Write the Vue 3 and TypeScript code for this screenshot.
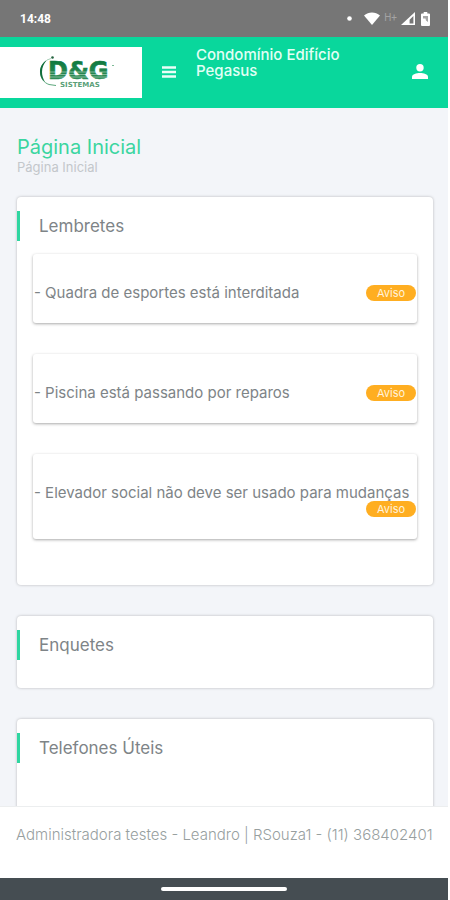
<script setup lang="ts">
interface Reminder {
  text: string
  tag: string
}

const reminders: Reminder[] = [
  { text: '- Quadra de esportes está interditada', tag: 'Aviso' },
  { text: '- Piscina está passando por reparos', tag: 'Aviso' },
  { text: '- Elevador social não deve ser usado para mudanças', tag: 'Aviso' },
]

const otherSections: string[] = ['Enquetes', 'Telefones Úteis']
</script>

<template>
  <div class="screen">
    <div class="status">
      <span class="clock">14:48</span>
      <div class="signals">
        <svg class="dot" width="5" height="5" viewBox="0 0 5 5"><circle cx="2.5" cy="2.5" r="2.3" fill="#fff" /></svg>
        <svg width="16" height="13" viewBox="0 0 16 13"><path d="M0 3.6C4.6-.6 11.4-.6 16 3.6L8 13z" fill="#fff" /></svg>
        <span class="network">H+</span>
        <svg width="14" height="13" viewBox="0 0 14 13">
          <path d="M14 0v13H0z" fill="#fff" /><path d="M12.4 4v7.4H8.6V7.8z" fill="#767676" />
        </svg>
        <svg class="battery" width="9" height="14" viewBox="0 0 9 14">
          <path d="M2.7 0h3.6v1.5H8a1 1 0 0 1 1 1V13a1 1 0 0 1-1 1H1a1 1 0 0 1-1-1V2.5a1 1 0 0 1 1-1h1.7z" fill="#fff" />
          <path d="M2 4h5v6L5 8.5 4.500 6.500H2z" fill="#a5a5a5" />
        </svg>
      </div>
    </div>

    <header class="topbar">
      <a class="logo" href="#" aria-label="D&amp;G Sistemas">
        <svg width="76" height="38" viewBox="0 0 76 38">
          <defs>
            <linearGradient id="brand" x1="0" y1="0" x2="0" y2="1">
              <stop offset="0" stop-color="#08753a" /><stop offset="1" stop-color="#3a9460" />
            </linearGradient>
          </defs>
          <path d="M6 8C-1 14 0 27 10 30.500l7 1" fill="none" stroke="#5ca77c" stroke-width="1" />
          <path d="M8 6C-1 11-1 23 6 28 1.500 21 2 12 8 6z" fill="#126f3c" />
          <path d="M8 6l4-1.500" stroke="#8fc2a5" stroke-width=".8" />
          <circle cx="13.500" cy="3.500" r="1.300" fill="#23633f" />
          <text x="9" y="25" class="brand">D&amp;G</text>
          <path d="M9 18h62M9 20.500h62M9 23h62" stroke="#fff" stroke-width=".6" opacity=".7" />
          <text x="21" y="33" class="brand-sub">SISTEMAS</text>
          <path d="M73 11.500h2" stroke="#7dba97" />
        </svg>
      </a>
      <button class="menu" type="button" aria-label="Menu">
        <svg width="14" height="12" viewBox="0 0 14 12"><path d="M0 1.500h14M0 6h14M0 10.500h14" stroke="#e9fff7" stroke-width="2.400" /></svg>
      </button>
      <div class="condo">Condomínio Edifício Pegasus</div>
      <button class="user" type="button" aria-label="Usuário">
        <svg width="16" height="15" viewBox="0 0 16 15">
          <circle cx="8" cy="3.700" r="3.700" fill="#fff" />
          <path d="M0 15v-2.200C0 10.200 4.500 9 8 9s8 1.200 8 3.800V15z" fill="#fff" />
        </svg>
      </button>
    </header>

    <main class="content">
      <h1>Página Inicial</h1>
      <p class="crumb">Página Inicial</p>

      <section class="card reminders">
        <h2>Lembretes</h2>
        <ul>
          <li v-for="item in reminders" :key="item.text">
            <span>{{ item.text }}</span>
            <span class="tag">{{ item.tag }}</span>
          </li>
        </ul>
      </section>

      <section v-for="title in otherSections" :key="title" class="card">
        <h2>{{ title }}</h2>
      </section>
    </main>

    <footer class="contact">Administradora testes - Leandro | RSouza1 - (11) 368402401</footer>
    <div class="navbar"><span class="handle"></span></div>
  </div>
</template>

<style>
body {
  margin: 0;
  background: #fff;
}
</style>

<style scoped>
* {
  box-sizing: border-box;
}
.screen {
  display: flex;
  flex-direction: column;
  height: 100vh;
  padding-right: 2px;
  font-family: Inter, 'Open Sans', sans-serif;
  color: #7e8487;
}
.status {
  flex: none;
  display: flex;
  align-items: center;
  justify-content: space-between;
  height: 37px;
  padding: 0 18px 0 20px;
  background: #767676;
  color: #fff;
}
.clock {
  font: 700 12px/16px Roboto, sans-serif;
}
.signals {
  display: flex;
  align-items: center;
  gap: 4px;
}
.dot {
  margin-right: 8px;
}
.network {
  align-self: flex-start;
  font: 400 10px/12px Roboto, sans-serif;
  color: #a3a3a3;
}
.battery {
  margin-left: 2px;
}
.topbar {
  flex: none;
  display: flex;
  align-items: flex-start;
  height: 71px;
  padding: 10px 20px 10px 0;
  background: #09d79c;
}
.logo {
  display: flex;
  align-items: center;
  justify-content: flex-end;
  width: 142px;
  height: 51px;
  padding-right: 27px;
  background: #fff;
}
.brand {
  font: 700 24px 'DejaVu Sans', sans-serif;
  fill: url(#brand);
  stroke: url(#brand);
  stroke-width: 0.6px;
}
.brand-sub {
  font: 700 7px 'DejaVu Sans', sans-serif;
  fill: #5a9f78;
}
button {
  display: flex;
  padding: 0;
  border: 0;
  background: none;
}
.menu {
  margin: 19px 20px 0;
}
.condo {
  flex: 1;
  max-width: 168px;
  font-size: 15px;
  font-weight: 500;
  line-height: 16px;
  color: #e2fff5;
}
.user {
  margin: 17px 0 0 auto;
}
.content {
  flex: 1;
  min-height: 0;
  overflow: hidden;
  padding: 27px 15px 0 17px;
  background: #f3f5f9;
}
h1 {
  margin: 0;
  font-size: 20px;
  font-weight: 400;
  line-height: 24px;
  color: #3bd5a0;
}
.crumb {
  margin: 0 0 22px;
  font-size: 13px;
  line-height: 16px;
  color: #c3c7cb;
}
.card {
  min-height: 72px;
  margin-bottom: 31px;
  padding: 14px 16px 0 0;
  border-radius: 4px;
  background: #fff;
  box-shadow: 0 0 3px rgba(0, 0, 0, 0.26);
}
.card:last-child {
  min-height: 120px;
}
h2 {
  margin: 0;
  padding-left: 19px;
  border-left: 3px solid #2fd6a1;
  font-size: 17px;
  font-weight: 400;
  line-height: 30px;
  color: #7e8487;
}
.reminders {
  padding-bottom: 46px;
}
ul {
  display: flex;
  flex-direction: column;
  gap: 31px;
  margin: 13px 0 0 16px;
  padding: 0;
  list-style: none;
}
li {
  display: flow-root;
  padding: 31px 1px 22px;
  border-radius: 3px;
  font-size: 15px;
  line-height: 16px;
  background: #fff;
  box-shadow: 0 1px 3px rgba(0, 0, 0, 0.34);
}
.tag {
  float: right;
  width: 50px;
  border-radius: 8px;
  font-size: 11px;
  line-height: 16px;
  text-align: center;
  color: #fff3dc;
  background: #ffae21;
}
.contact {
  flex: none;
  height: 72px;
  padding: 18px 12px 0 16px;
  border-top: 1px solid #eceeef;
  font-size: 15px;
  font-weight: 300;
  line-height: 20px;
  color: #989f9f;
  background: #fff;
}
.navbar {
  flex: none;
  display: flex;
  align-items: center;
  justify-content: center;
  height: 22px;
  background: #454d52;
}
.handle {
  width: 28%;
  height: 4px;
  border-radius: 2px;
  background: #fff;
}
</style>
